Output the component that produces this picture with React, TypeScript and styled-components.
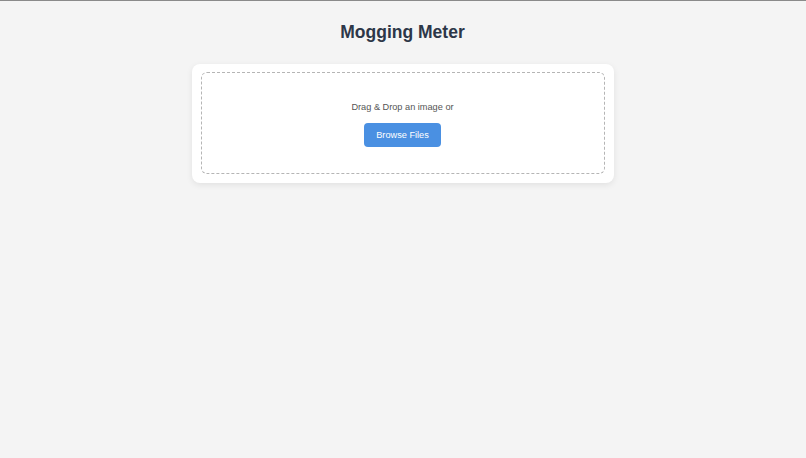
import React from 'react'
import styled, { createGlobalStyle } from 'styled-components'

const GlobalStyle = createGlobalStyle`
  html, body {
    margin: 0;
    padding: 0;
    background-color: #f4f4f4;
    font-family: 'Liberation Sans', Arial, sans-serif;
  }
  body {
    border-top: 1px solid #8a8a8a;
    min-height: 457px;
  }
`

const Page = styled.main`
  display: flex;
  flex-direction: column;
  align-items: center;
  padding: 20px 1px 0 0;
`

const Title = styled.h1`
  margin: 0 0 21px;
  font-size: 17.5px;
  line-height: 22px;
  font-weight: 700;
  color: #2d3748;
`

const Card = styled.section`
  width: 422px;
  box-sizing: border-box;
  padding: 8px 9px 9px;
  background-color: #fff;
  border-radius: 8px;
  box-shadow: 0 2px 6px rgba(0, 0, 0, 0.08);
`

const DropZone = styled.div`
  display: flex;
  flex-direction: column;
  align-items: center;
  gap: 8px;
  padding: 26px 0;
  border: 1px dashed #b5b5b5;
  border-radius: 6px;
`

const Hint = styled.p`
  margin: 0;
  font-size: 9.2px;
  line-height: 16px;
  color: #555;
`

const BrowseButton = styled.button`
  height: 24px;
  width: 77px;
  padding: 0;
  border: 0;
  border-radius: 4px;
  background-color: #4a90e2;
  color: #fff;
  font-family: inherit;
  font-size: 9.2px;
  font-weight: 500;
  cursor: pointer;
`

export default function App() {
  return (
    <>
      <GlobalStyle />
      <Page>
        <Title>Mogging Meter</Title>
        <Card>
          <DropZone>
            <Hint>Drag &amp; Drop an image or</Hint>
            <BrowseButton>Browse Files</BrowseButton>
          </DropZone>
        </Card>
      </Page>
    </>
  )
}
